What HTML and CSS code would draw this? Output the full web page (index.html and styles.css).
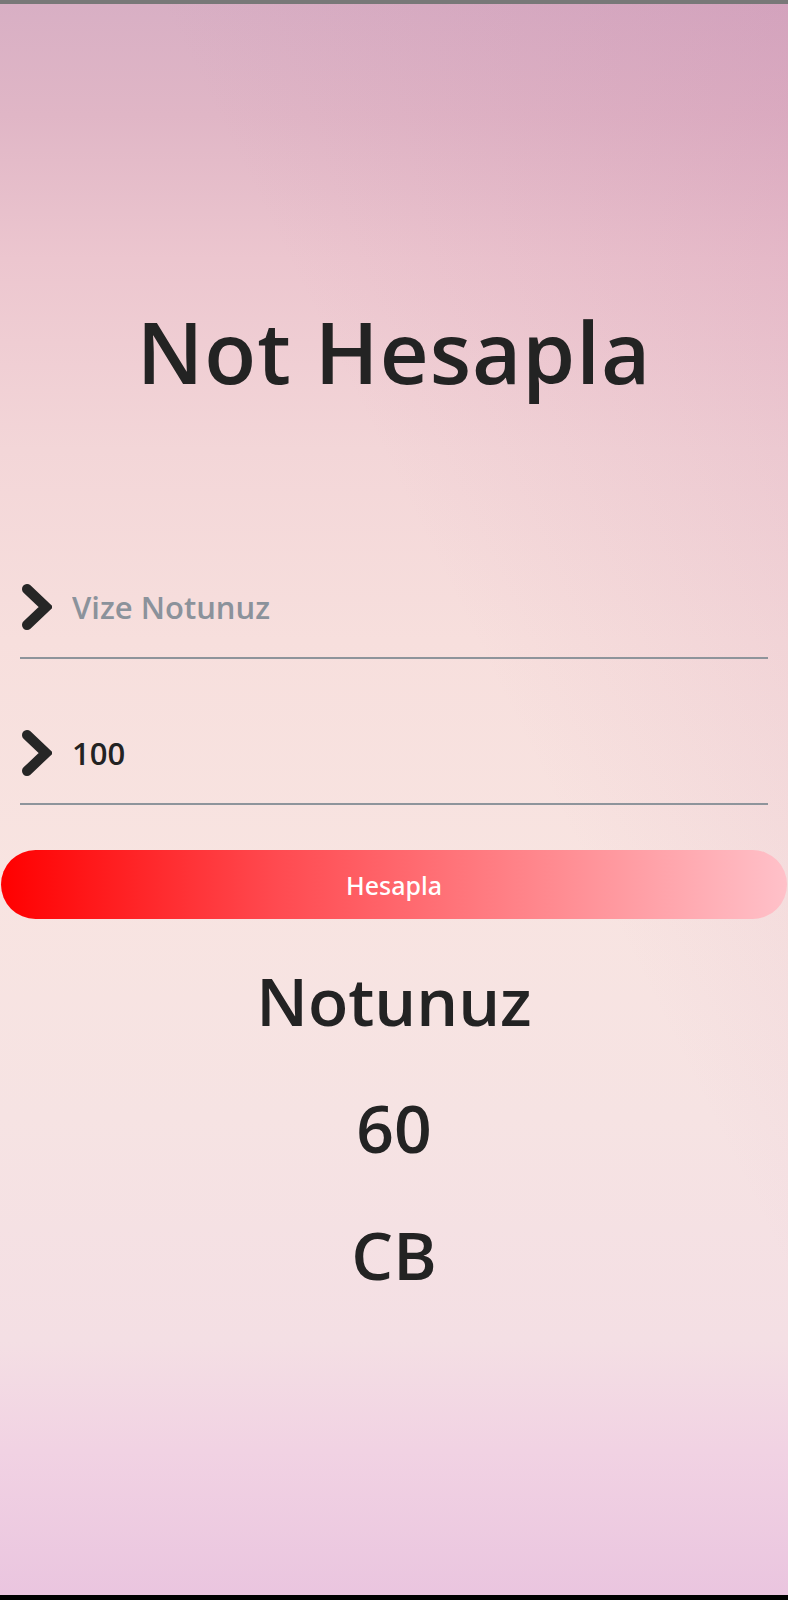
FILE: index.html
```html
<!DOCTYPE html>
<html lang="tr">
<head>
<meta charset="utf-8">
<title>Not Hesapla</title>
<link rel="stylesheet" href="styles.css">
</head>
<body>
<div class="screen">
  <h1 class="title">Not Hesapla</h1>
  <form class="form">
    <label class="field">
      <svg class="chevron" viewBox="0 0 30 46" width="30" height="46" aria-hidden="true"><polyline points="5,5 24,23 5,41" /></svg>
      <input class="input" type="text" placeholder="Vize Notunuz">
    </label>
    <label class="field">
      <svg class="chevron" viewBox="0 0 30 46" width="30" height="46" aria-hidden="true"><polyline points="5,5 24,23 5,41" /></svg>
      <input class="input" type="text" value="100">
    </label>
    <button class="button" type="button">Hesapla</button>
  </form>
  <div class="result">
    <p class="result-line">Notunuz</p>
    <p class="result-line">60</p>
    <p class="result-line">CB</p>
  </div>
</div>
</body>
</html>
```

FILE: styles.css
```css
html, body {
  margin: 0;
  padding: 0;
}

body {
  width: 788px;
  height: 1600px;
  overflow: hidden;
  font-family: "Open Sans", "DejaVu Sans", sans-serif;
  color: #232323;
}

.screen {
  box-sizing: border-box;
  width: 788px;
  height: 1600px;
  border-top: 4px solid #787878;
  border-bottom: 5px solid #000;
  display: flex;
  flex-direction: column;
  background:
    linear-gradient(to bottom left, rgba(195, 120, 165, 0.22) 0%, rgba(195, 120, 165, 0) 40%),
    linear-gradient(to bottom,
      #d8afc4 0%,
      #e0b6c6 7%,
      #ecc6cf 16%,
      #f3d6d8 28%,
      #f7dfdd 40%,
      #f8e4e1 55%,
      #f6e3e3 70%,
      #f4dfe4 84%,
      #f1d2e3 91%,
      #eac5df 100%);
}

.title {
  margin: 297px 0 0;
  text-align: center;
  font-size: 85px;
  line-height: 100px;
  font-weight: 600;
  letter-spacing: 1px;
}

.form {
  margin-top: 156px;
  display: flex;
  flex-direction: column;
}

.field {
  margin: 0 20px 44px;
  height: 102px;
  box-sizing: border-box;
  border-bottom: 2px solid #8e949b;
  display: flex;
  align-items: center;
  gap: 20px;
}

.chevron {
  margin-left: 2px;
  flex: none;
}

.chevron polyline {
  fill: none;
  stroke: #262626;
  stroke-width: 10;
  stroke-linecap: round;
  stroke-linejoin: miter;
}

.input {
  flex: 1;
  border: none;
  outline: none;
  background: transparent;
  padding: 0;
  font-family: "Open Sans", "DejaVu Sans", sans-serif;
  font-size: 31px;
  font-weight: 600;
  color: #232323;
}

.input::placeholder {
  color: #8b929b;
}

.button {
  margin: 1px 1px 0;
  height: 69px;
  border: none;
  border-radius: 35px;
  background: linear-gradient(to right, #ff0000 0%, #ff4a50 35%, #ff8a90 70%, #ffc1c9 100%);
  color: #fff;
  font-family: "Noto Sans", "Open Sans", sans-serif;
  font-size: 25px;
  font-weight: 500;
  padding: 0;
}

.result {
  margin-top: 18px;
  display: flex;
  flex-direction: column;
  align-items: center;
}

.result-line {
  margin: 0;
  font-size: 66px;
  line-height: 127px;
  font-weight: 600;
}
```
